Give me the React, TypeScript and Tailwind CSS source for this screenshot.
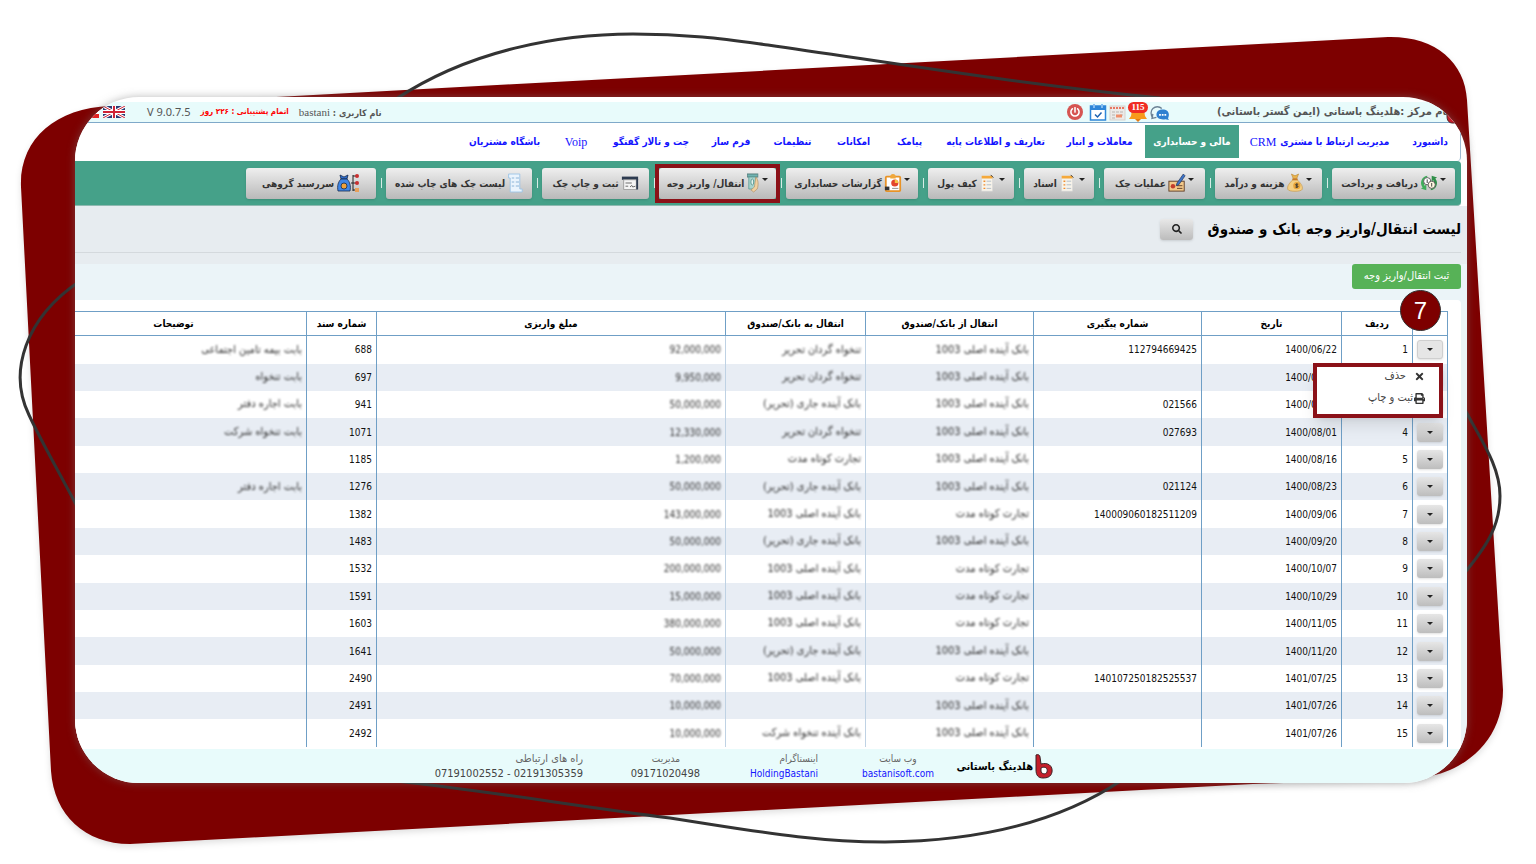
import React from "react";
import { FaSearch, FaPrint, FaTimes, FaPowerOff } from "react-icons/fa";

const navItems = [
  { label: "داشبورد", width: "w-[60px]" },
  { label: "مدیریت ارتباط با مشتری", latin: "CRM", width: "w-[157px]" },
  { label: "مالی و حسابداری", width: "w-[94px]", active: true },
  { label: "معاملات و انبار", width: "w-[87px]" },
  { label: "تعاریف و اطلاعات پایه", width: "w-[117px]" },
  { label: "پیامک", width: "w-[51px]" },
  { label: "امکانات", width: "w-[57px]" },
  { label: "تنظیمات", width: "w-[61px]" },
  { label: "فرم ساز", width: "w-[58px]" },
  { label: "چت و تالار گفتگو", width: "w-[98px]" },
  { label: "", latin: "Voip", width: "w-[48px]" },
  { label: "باشگاه مشتریان", width: "w-[91px]" },
];

function CoinsIcon() {
  return (
    <svg viewBox="0 0 20 20" className="h-5 w-[18px] shrink-0">
      <path d="M8 2 A8 8 0 0 0 3 15 l-2 1 l6 2 l0 -6 l-2 1 A6 6 0 0 1 8 5z" fill="#3fae5a" />
      <path d="M12 18 A8 8 0 0 0 17 5 l2 -1 l-6 -2 l0 6 l2 -1 A6 6 0 0 1 12 15z" fill="#2f8f49" />
      <circle cx="8" cy="8" r="4" fill="#fff" stroke="#555" />
      <circle cx="13" cy="12" r="4" fill="#fff8e0" stroke="#555" />
      <path d="M8 6v4M13 10v4" stroke="#333" />
    </svg>
  );
}

function MoneyBagIcon() {
  return (
    <svg viewBox="0 0 20 20" className="h-5 w-[18px] shrink-0">
      <path d="M6 0l4 2 4-2-2 5H8z" fill="#e9b44c" stroke="#b9822b" strokeWidth=".6" />
      <path d="M8 6h4c4 4 7 7 6 11-1 3-15 3-16 0-1-4 2-7 6-11z" fill="#f3cf85" stroke="#c58f35" strokeWidth=".6" />
      <rect x="7" y="5" width="6" height="2" fill="#c97b25" />
      <circle cx="12" cy="13" r="4" fill="#e8a53a" />
      <path d="M13.500 11.500c-3-1-4 1-1.500 1.500s1.500 2.500-1.500 1.500M12 10.500v5" stroke="#333" fill="none" />
    </svg>
  );
}

function ChequeIcon() {
  return (
    <svg viewBox="0 0 20 20" className="h-5 w-[18px] shrink-0">
      <rect x="1" y="8" width="17" height="11" fill="#f3c98a" stroke="#5d3a22" />
      <circle cx="5.500" cy="13.500" r="2.500" fill="#c43d2b" />
      <path d="M10 13h6M10 16h6" stroke="#5d3a22" />
      <path d="M17 0l2 2-7 10-3 1 1-3z" fill="#3c73c9" stroke="#20304f" strokeWidth=".7" />
    </svg>
  );
}

function NotesIcon() {
  return (
    <svg viewBox="0 0 20 20" className="h-5 w-[18px] shrink-0">
      <rect x="3" y="3" width="12" height="16" fill="#f7f3ea" stroke="#d8d8d8" strokeWidth=".7" />
      <rect x="3" y="2" width="12" height="3" fill="#f5a93b" />
      <path d="M13 1l3 3" stroke="#333" />
      <path d="M5 8h2M5 12h2M5 16h2" stroke="#f08d2d" strokeWidth="1.500" />
      <path d="M8.500 8h5M8.500 12h5M8.500 16h5" stroke="#aebac7" />
    </svg>
  );
}

function ReportIcon() {
  return (
    <svg viewBox="0 0 20 20" className="h-5 w-[18px] shrink-0">
      <rect x="2" y="3" width="16" height="16" rx="1" fill="#fff" stroke="#e89327" strokeWidth="2" />
      <path d="M7 3a3 3 0 0 1 6 0v2H7z" fill="#f0a73b" />
      <circle cx="12" cy="10" r="4" fill="#e2452c" />
      <path d="M12 10V6a4 4 0 0 1 4 4z" fill="#f6c344" />
      <rect x="1" y="14" width="5" height="4" fill="#333" />
      <path d="M9 16h7" stroke="#888" />
    </svg>
  );
}

function TransferIcon() {
  return (
    <svg viewBox="0 0 20 20" className="h-5 w-[14px] shrink-0" preserveAspectRatio="none">
      <rect x="2" y="1" width="15" height="3" fill="#6fb3b1" stroke="#56807f" />
      <path d="M4 4h10v12H4z" fill="#a9d3cd" stroke="#5d9d97" />
      <path d="M14 4c4 3 4 8 2 12l-5 3-4-2 5-3z" fill="#f0d0a0" stroke="#ad8b5e" strokeWidth=".7" />
      <ellipse cx="9" cy="9" rx="2" ry="3" fill="#e6f3ee" stroke="#4f938c" />
    </svg>
  );
}

function PrintChequeIcon() {
  return (
    <svg viewBox="0 0 20 20" className="h-4 w-[18px] shrink-0" preserveAspectRatio="none">
      <rect x="1" y="2" width="18" height="4" fill="#2d3b50" />
      <rect x="3" y="6" width="14" height="12" fill="#f5f5f5" stroke="#999" />
      <path d="M5 10h7M5 14h3M10 15l2-2 1 2 3-1" stroke="#555" fill="none" />
      <path d="M18 5v13" stroke="#2d3b50" strokeWidth="2" />
    </svg>
  );
}

function ListIcon() {
  return (
    <svg viewBox="0 0 20 20" className="h-5 w-4 shrink-0" preserveAspectRatio="none">
      <path d="M2 1h14v15h3v3H4V5H2z" fill="#eaf4fd" stroke="#9cc4e6" />
      <path d="M6 5h3M6 9h3M6 13h3M11 5h4M11 9h4M11 13h4" stroke="#83aed4" />
    </svg>
  );
}

function GroupIcon() {
  return (
    <svg viewBox="0 0 24 20" className="h-5 w-6 shrink-0">
      <path d="M4 2l4 2 4-2-1 4H5z" fill="#2f6fd0" stroke="#15294d" strokeWidth=".8" />
      <path d="M5 6h6c3 3 4 7 3 12H2C1 13 2 9 5 6z" fill="#3f86e6" stroke="#15294d" strokeWidth=".8" />
      <circle cx="8" cy="13" r="3" fill="#f0a23b" stroke="#15294d" strokeWidth=".8" />
      <path d="M17 2v16M15 10h4M17 3h4M17 17h4M19 10h3" stroke="#222" />
      <circle cx="21" cy="3" r="2" fill="#c92f2f" />
      <circle cx="21" cy="10" r="2" fill="#c92f2f" />
      <rect x="19" y="15" width="4" height="4" fill="#e8a05a" />
    </svg>
  );
}

const toolbar = [
  { label: "دریافت و پرداخت", width: "w-[123px]", icon: <CoinsIcon />, menu: true },
  { label: "هزینه و درآمد", width: "w-[107px]", icon: <MoneyBagIcon />, menu: true },
  { label: "عملیات چک", width: "w-[101px]", icon: <ChequeIcon />, menu: true },
  { label: "اسناد", width: "w-[70px]", icon: <NotesIcon />, menu: true },
  { label: "کیف پول", width: "w-[86px]", icon: <NotesIcon />, menu: true },
  { label: "گزارشات حسابداری", width: "w-[132px]", icon: <ReportIcon />, menu: true },
  { label: "انتقال/ واریز وجه", width: "w-[117px]", icon: <TransferIcon />, menu: true, marked: true },
  { label: "ثبت و چاپ چک", width: "w-[107px]", icon: <PrintChequeIcon /> },
  { label: "لیست چک های چاپ شده", width: "w-[146px]", icon: <ListIcon /> },
  { label: "سررسید گروهی", width: "w-[130px]", icon: <GroupIcon /> },
];

const MAIN = "بانک آینده اصلی 1003";
const CURRENT = "بانک آینده جاری (تحریر)";
const SHORT = "تجارت کوتاه مدت";
const PETTY = "تنخواه گردان تحریر";

// row number, date, tracking number, from, to, amount, document number, description
const rows = [
  ["1", "1400/06/22", "112794669425", MAIN, PETTY, "92,000,000", "688", "بابت بیمه تامین اجتماعی"],
  ["", "1400/07/05", "", MAIN, PETTY, "9,950,000", "697", "بابت تنخواه"],
  ["", "1400/07/18", "021566", MAIN, CURRENT, "50,000,000", "941", "بابت اجاره دفتر"],
  ["4", "1400/08/01", "027693", MAIN, PETTY, "12,330,000", "1071", "بابت تنخواه شرکت"],
  ["5", "1400/08/16", "", MAIN, SHORT, "1,200,000", "1185", ""],
  ["6", "1400/08/23", "021124", MAIN, CURRENT, "50,000,000", "1276", "بابت اجاره دفتر"],
  ["7", "1400/09/06", "140009060182511209", SHORT, MAIN, "143,000,000", "1382", ""],
  ["8", "1400/09/20", "", MAIN, CURRENT, "50,000,000", "1483", ""],
  ["9", "1400/10/07", "", SHORT, MAIN, "200,000,000", "1532", ""],
  ["10", "1400/10/29", "", SHORT, MAIN, "15,000,000", "1591", ""],
  ["11", "1400/11/05", "", SHORT, MAIN, "380,000,000", "1603", ""],
  ["12", "1400/11/20", "", MAIN, CURRENT, "50,000,000", "1641", ""],
  ["13", "1401/07/25", "140107250182525537", SHORT, MAIN, "70,000,000", "2490", ""],
  ["14", "1401/07/26", "", MAIN, "", "10,000,000", "2491", ""],
  ["15", "1401/07/26", "", MAIN, "بانک آینده تنخواه شرکت", "10,000,000", "2492", ""],
];

function Backdrop() {
  return (
    <svg
      className="absolute inset-0 h-full w-full"
      viewBox="0 0 1536 864"
      preserveAspectRatio="none"
      aria-hidden="true"
    >
      <path
        d="M21 187 C19 140 55 108 110 106 L1388 37 C1435 36 1465 62 1467 100 L1503 690 C1503 740 1465 776 1410 779 L1253 784 L130 844 C85 844 54 815 51 771 Z"
        fill="#7d0000"
        className="drop-shadow-md"
      />
      <g fill="none" stroke="#333" strokeWidth="3">
        <path d="M396 99 C470 50 560 34 633 34 C690 34 730 40 768 45 C900 64 1020 84 1160 98" />
        <path d="M80 281 C25 318 8 372 29 415 C42 443 58 470 80 512" />
        <path d="M1462 404 C1478 436 1500 464 1500 496 C1500 525 1488 545 1462 576" />
        <path d="M396 781 C480 790 570 805 670 818 C750 830 810 842 885 842 C980 841 1060 822 1122 780" />
      </g>
    </svg>
  );
}

function Logo({ className }: { className: string }) {
  return (
    <svg viewBox="0 0 18 25" className={className}>
      <path
        d="M1 1c2-1 4 0 4 2l1 7c7-2 12 2 11 8-1 5-5 6-9 6-5 0-7-3-7-8z"
        fill="#c41f2b"
        stroke="#3b2326"
      />
      <path d="M6 14c4-2 7 0 6 4-1 3-6 2-6-1z" fill="#fff" stroke="#3b2326" />
    </svg>
  );
}

function HeaderIcons() {
  return (
    <div className="flex items-center gap-[2px]">
      <button aria-label="گفتگو" className="mt-[2px]">
        <svg viewBox="0 0 22 18" className="h-[16px] w-[20px]">
          <path d="M3 14a7 7 0 1 1 10-10" fill="none" stroke="#6c8295" strokeWidth="1.500" />
          <path d="M3 10l-1 5 5-1" fill="none" stroke="#6c8295" strokeWidth="1.500" />
          <path d="M14 5c4 0 7 2 7 6 0 1-.5 3-1 4l1 2-4-1c-5 1-10-1-10-5 0-4 3-6 7-6z" fill="#2f80d0" />
          <path d="M10 11h2M13 11h2M16 11h2" stroke="#fff" strokeWidth="2" />
        </svg>
      </button>
      <button aria-label="اعلان ها" className="relative h-5 w-5">
        <svg viewBox="0 0 20 20" className="h-5 w-5">
          <path d="M4 8h12l1 6 2 3H1l2-3z" fill="#f79a1c" />
          <path d="M7 17h6l-3 3z" fill="#e37b12" />
        </svg>
        <span className="absolute inset-x-0 top-0 flex h-[11px] items-center justify-center rounded-full bg-[#f02c24] font-['Liberation_Serif',serif] text-[9px] font-bold text-white">
          115
        </span>
      </button>
      <button aria-label="تقویم">
        <svg viewBox="0 0 17 17" className="h-[17px] w-[17px]">
          <rect x="1" y="2" width="15" height="14" fill="#eceae8" stroke="#d8d2ce" />
          <path d="M1 4h15" stroke="#e77863" strokeWidth="2" strokeDasharray="2 1" />
          <path d="M3 8h3M7 8h3M11 8h3M3 11h3M11 11h3M3 14h3" stroke="#b9b4b0" />
          <path d="M7 12h6" stroke="#ef8f6b" strokeWidth="3" />
        </svg>
      </button>
      <button aria-label="کارها">
        <svg viewBox="0 0 18 18" className="h-[18px] w-[18px]">
          <rect x="1.500" y="3" width="15" height="14" fill="#fff" stroke="#2e86d8" strokeWidth="1.500" />
          <path d="M1 3h16v4H1z" fill="#2e86d8" />
          <path d="M5 1v4M13 1v4" stroke="#85bdf0" strokeWidth="2" />
          <path d="M6 11.500l2.500 2.500 4-4.500" fill="none" stroke="#1e62b0" strokeWidth="1.500" />
        </svg>
      </button>
      <button
        aria-label="خروج"
        className="mr-1 flex h-4 w-4 items-center justify-center rounded-full bg-[#d65552] text-[10px] text-white"
      >
        <FaPowerOff />
      </button>
    </div>
  );
}

function Flags() {
  return (
    <div className="flex gap-1">
      <svg viewBox="0 0 22 12" className="h-[12px] w-[22px]">
        <rect width="22" height="12" fill="#2b3a74" />
        <path d="M0 0l22 12M22 0L0 12" stroke="#fff" strokeWidth="3" />
        <path d="M0 0l22 12M22 0L0 12" stroke="#cf2436" strokeWidth="1" />
        <path d="M11 0v12M0 6h22" stroke="#fff" strokeWidth="4" />
        <path d="M11 0v12M0 6h22" stroke="#cf2436" strokeWidth="2" />
      </svg>
      <svg viewBox="0 0 22 12" className="h-[12px] w-[22px]">
        <rect width="22" height="4" fill="#2c9a4b" />
        <rect y="4" width="22" height="4" fill="#fff" />
        <rect y="8" width="22" height="4" fill="#e32222" />
      </svg>
    </div>
  );
}

function Header() {
  return (
    <header className="relative flex h-[21px] items-center border-b border-[#7fa9c9] bg-[#e8fbfb] pr-[17px] text-[#555]">
      <Logo className="absolute top-0 right-[4px] h-[22px] w-[18px]" />
      <div className="relative w-[233px] text-[11px] font-bold whitespace-nowrap">
        نام مرکز :هلدینگ باستانی (ایمن گستر باستانی)
      </div>
      <div className="mr-[47px]">
        <HeaderIcons />
      </div>
      <div className="mr-auto flex items-center gap-[10px] pl-[2px] whitespace-nowrap">
        <div className="text-[9px] font-bold">
          نام کاربری :{" "}
          <span className="font-['Liberation_Serif',serif] text-[11px] font-normal">bastani</span>
        </div>
        <div className="text-[8px] font-bold text-[#f00]">اتمام پشتیبانی : ۲۲۶ روز</div>
        <div dir="ltr" className="font-['Noto_Sans',sans-serif] text-[11px]">V 9.0.7.5</div>
        <div className="mr-3">
          <Flags />
        </div>
      </div>
    </header>
  );
}

function Nav() {
  return (
    <nav className="mr-[6px] flex h-[38px] gap-[2px] rounded-br-sm border-r border-[#9dbad2] bg-white pt-[2px] pb-[3px]">
      {navItems.map((item) => (
        <a
          key={item.width}
          href="#"
          className={`${item.width} flex shrink-0 items-center justify-center gap-1 text-[10px] font-bold whitespace-nowrap ${
            item.active ? "bg-[#45a189] text-white" : "text-[#1414ff]"
          }`}
        >
          {item.label}
          {item.latin && (
            <span className="font-['Liberation_Serif',serif] text-[12px] font-normal">{item.latin}</span>
          )}
        </a>
      ))}
    </nav>
  );
}

function Toolbar() {
  return (
    <div className="mr-[6px] flex h-[45px] items-center rounded-r-sm border-b border-[#8fb9b1] bg-[#45a189] pr-[6px]">
      {toolbar.map((item, i) => (
        <React.Fragment key={item.label}>
          {i > 0 && (
            <span className="flex w-[10px] shrink-0 justify-center">
              <span className="h-[10px] w-px bg-[#d7ece6]" />
            </span>
          )}
          <div className="relative shrink-0">
            <button
              className={`${item.width} flex h-[31px] items-center justify-center gap-[2px] rounded-[3px] bg-linear-to-b from-[#efefef] to-[#b9b9b9] text-[10px] font-bold whitespace-nowrap text-[#333] shadow-sm`}
            >
              {item.menu && (
                <span className="mb-2 border-x-3 border-t-3 border-x-transparent border-t-[#222]" />
              )}
              {item.icon}
              {item.label}
            </button>
            {item.marked && (
              <span className="pointer-events-none absolute -inset-[4px] border-4 border-[#8b1118]" />
            )}
          </div>
        </React.Fragment>
      ))}
    </div>
  );
}

function RowMenu() {
  return (
    <div className="absolute top-[27px] right-[4px] z-10 flex h-[55px] w-[130px] flex-col gap-1 border-4 border-[#8b1118] bg-white pr-[14px] text-[11px] text-[#444] shadow-lg">
      <button className="flex h-[18px] items-center gap-2 text-right">
        <FaTimes className="text-[#333]" /> حذف
      </button>
      <button className="flex h-[18px] items-center gap-px text-right">
        <FaPrint className="text-[#333]" /> ثبت و چاپ
      </button>
    </div>
  );
}

function TransferTable() {
  const head = "border border-[#6f9fc6] p-0";
  const cell = "border-l border-[#6f9fc6] py-0 pr-1 pl-0";
  const faintCell = "border-l border-[#bfd2e4] py-0 pr-1 pl-0";
  const hidden = "text-[11px] text-[#333] blur-[1px]";
  return (
    <table className="h-[436px] w-full table-fixed border-collapse text-right text-[10px] whitespace-nowrap text-[#111]">
      <colgroup>
        <col className="w-[35px]" />
        <col className="w-[71px]" />
        <col className="w-[140px]" />
        <col className="w-[168px]" />
        <col className="w-[168px]" />
        <col className="w-[140px]" />
        <col className="w-[349px]" />
        <col className="w-[70px]" />
        <col />
      </colgroup>
      <thead>
        <tr className="h-[24px] text-center text-black">
          <th className={head}></th>
          <th className={head}>ردیف</th>
          <th className={head}>تاریخ</th>
          <th className={head}>شماره پیگیری</th>
          <th className={head}>انتقال از بانک/صندوق</th>
          <th className={head}>انتقال به بانک/صندوق</th>
          <th className={head}>مبلغ واریزی</th>
          <th className={head}>شماره سند</th>
          <th className="border-y border-[#6f9fc6] p-0 pr-[34px]">توضیحات</th>
        </tr>
      </thead>
      <tbody>
        {rows.map((row, i) => (
          <tr key={i} className="even:bg-[#e8edf4]">
            <td className="relative border-x border-[#6f9fc6] p-0">
              <button
                aria-label="عملیات"
                className={`mx-auto flex h-[19px] w-[26px] items-center justify-center rounded-[3px] shadow-sm ${
                  i === 0
                    ? "border border-[#cfcfcf] bg-[#e6e6e6]"
                    : "bg-linear-to-b from-[#e6e6e6] to-[#bdbdbd]"
                }`}
              >
                <span className="border-x-3 border-t-3 border-x-transparent border-t-[#222]" />
              </button>
              {i === 0 && <RowMenu />}
            </td>
            <td className={cell}>{row[0]}</td>
            <td className={cell}>{row[1]}</td>
            <td className={cell}>{row[2]}</td>
            <td className={faintCell}>
              <span className={hidden}>{row[3]}</span>
            </td>
            <td className={faintCell}>
              <span className={hidden}>{row[4]}</span>
            </td>
            <td className={cell}>
              <span className="text-[#333] blur-[1px]">{row[5]}</span>
            </td>
            <td className={cell}>{row[6]}</td>
            <td className="p-0 pr-1">
              <span className={hidden}>{row[7]}</span>
            </td>
          </tr>
        ))}
      </tbody>
    </table>
  );
}

function Footer() {
  return (
    <footer className="flex h-[34px] items-center bg-[#e8fbfb] pr-[414px] text-[10px] leading-[15px] whitespace-nowrap text-[#666]">
      <Logo className="h-[25px] w-[18px]" />
      <div className="mr-[2px] w-[80px] text-[11px] font-bold text-black">هلدینگ باستانی</div>
      <div className="mr-[18px] w-[74px] text-center">
        <div>وب سایت</div>
        <a href="#" className="text-[#1414ff]">bastanisoft.com</a>
      </div>
      <div className="mr-[43px] w-[70px]">
        <div>اینستاگرام</div>
        <a href="#" className="text-[#1414ff]">HoldingBastani</a>
      </div>
      <div className="mr-[48px] w-[68px] text-center">
        <div>مدیریت</div>
        <div className="text-[11px] text-[#444]">09171020498</div>
      </div>
      <div className="mr-[49px]">
        <div className="text-[11px]">راه های ارتباطی</div>
        <div dir="ltr" className="text-[11px] text-[#444]">07191002552 - 02191305359</div>
      </div>
    </footer>
  );
}

function App() {
  return (
    <div className="relative min-h-screen overflow-hidden bg-white pt-[97px] pr-[69px] pb-20 pl-[75px] font-['DejaVu_Sans_Condensed','DejaVu_Sans',sans-serif]">
      <Backdrop />
      <main
        dir="rtl"
        className="relative overflow-hidden rounded-[64px] bg-white pt-[5px] shadow-[0_0_8px_rgba(120,120,120,0.5)]"
      >
        <Header />
        <Nav />
        <Toolbar />
        <section className="bg-[#e7ecf0] pb-[11px]">
          <div className="mr-[6px] flex h-[47px] items-center gap-[6px] border-b border-[#d4d9dd]">
            <h1 className="w-[262px] text-[15px] font-bold whitespace-nowrap text-black">
              لیست انتقال/واریز وجه بانک و صندوق
            </h1>
            <button
              aria-label="جستجو"
              className="flex h-[21px] w-[33px] items-center justify-center rounded-[3px] bg-linear-to-b from-[#e8e8e8] to-[#bcbcbc] text-[10px] text-[#222] shadow-sm"
            >
              <FaSearch />
            </button>
          </div>
        </section>
        <section className="bg-[#ebf4f8] pr-[6px]">
          <button className="mb-[11px] block h-[25px] w-[109px] rounded-[3px] bg-[#57b257] text-[11px] text-white">
            ثبت انتقال/واریز وجه
          </button>
          <div className="relative rounded-tr-sm bg-white pt-[11px] pr-[13px] pb-[2px]">
            <TransferTable />
            <span className="absolute -top-[10px] right-[20px] z-10 flex h-[41px] w-[41px] items-center justify-center rounded-full border border-[#333] bg-[#7d0000] font-['Liberation_Sans',sans-serif] text-[24px] text-white">
              7
            </span>
          </div>
        </section>
        <Footer />
      </main>
    </div>
  );
}

export default App;
